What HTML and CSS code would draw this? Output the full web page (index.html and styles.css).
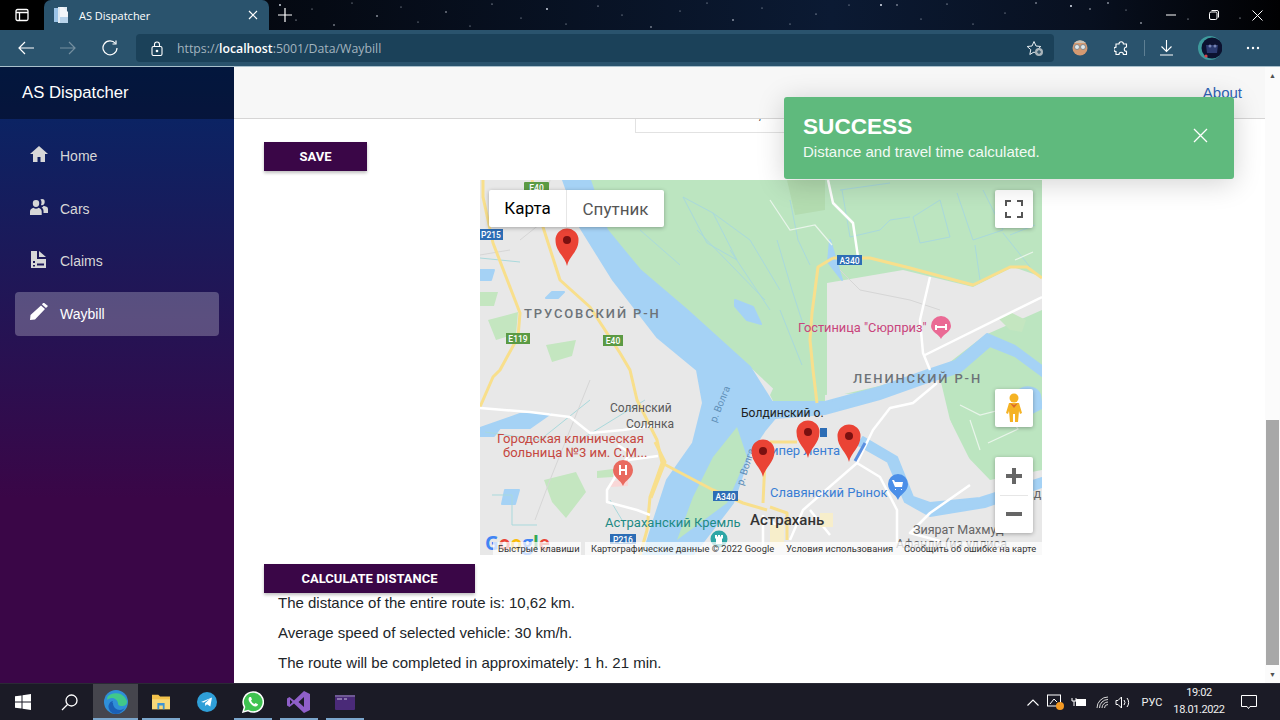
FILE: index.html
```html
<!DOCTYPE html>
<html lang="en">
<head>
<meta charset="utf-8">
<title>AS Dispatcher</title>
<link rel="stylesheet" href="styles.css">
</head>
<body>
<div class="chrome">
  <div class="titlebar">
    <svg class="stars" width="1280" height="30" viewBox="0 0 1280 30" fill="#dfe6f2">
      <circle cx="280" cy="5" r=".9"/><circle cx="296" cy="20" r=".6"/><circle cx="312" cy="9" r=".5"/><circle cx="334" cy="25" r=".7"/><circle cx="352" cy="3" r=".5"/><circle cx="377" cy="16" r=".8"/><circle cx="401" cy="7" r=".5"/><circle cx="418" cy="22" r=".5"/><circle cx="446" cy="12" r=".7"/><circle cx="470" cy="26" r=".5"/><circle cx="492" cy="4" r=".6"/><circle cx="521" cy="18" r=".5"/><circle cx="547" cy="9" r=".9"/><circle cx="566" cy="24" r=".5"/><circle cx="598" cy="6" r=".6"/><circle cx="622" cy="15" r=".5"/><circle cx="651" cy="27" r=".7"/><circle cx="680" cy="11" r=".5"/><circle cx="707" cy="3" r=".5"/><circle cx="733" cy="20" r=".8"/><circle cx="762" cy="8" r=".5"/><circle cx="790" cy="24" r=".5"/><circle cx="816" cy="14" r=".6"/><circle cx="849" cy="5" r=".5"/><circle cx="881" cy="5" r="1"/><circle cx="897" cy="5" r=".7"/><circle cx="921" cy="19" r=".5"/><circle cx="947" cy="4" r=".6"/><circle cx="973" cy="24" r=".5"/><circle cx="1005" cy="13" r=".5"/><circle cx="1036" cy="3" r=".7"/><circle cx="1071" cy="6" r="1"/><circle cx="1090" cy="9" r=".7"/><circle cx="1108" cy="3" r=".8"/><circle cx="1126" cy="10" r=".5"/><circle cx="1141" cy="23" r=".8"/><circle cx="1188" cy="19" r=".6"/><circle cx="1240" cy="18" r=".6"/>
    </svg>
    <div class="tab-toggle"><svg width="14" height="14" viewBox="0 0 14 14" fill="none" stroke="#fff" stroke-width="1.3"><rect x="1" y="1.5" width="12" height="11" rx="1.5"/><path d="M1 4.500h12M4.500 4.500v8"/></svg></div>
    <div class="tab">
      <svg class="favicon" width="16" height="17" viewBox="0 0 16 17"><rect x="0" y="1" width="6" height="14" fill="#9cc3e6"/><rect x="4" y="0" width="9" height="16" fill="#dfe9f2"/><path d="M9 0l5 5v11H6V0z" fill="#f3f6f9"/><rect x="6" y="10" width="8" height="6" fill="#b8d3ea"/></svg>
      <span class="tab-title">AS Dispatcher</span>
      <svg class="tab-close" width="10" height="10" viewBox="0 0 10 10" stroke="#fff" stroke-width="1.2"><path d="M1 1l8 8M9 1l-8 8"/></svg>
    </div>
    <svg class="new-tab" width="14" height="14" viewBox="0 0 14 14" stroke="#fff" stroke-width="1.2"><path d="M7 0v14M0 7h14"/></svg>
    <div class="grow"></div>
    <div class="winctl">
      <svg width="10" height="10" viewBox="0 0 10 10" stroke="#fff" stroke-width="1"><path d="M0 5h10"/></svg>
      <svg width="10" height="10" viewBox="0 0 10 10" fill="none" stroke="#fff" stroke-width="1"><rect x=".5" y="2" width="7.5" height="7.5" rx="1.5"/><path d="M2.500 .5H8a1.500 1.500 0 0 1 1.500 1.500v5.500"/></svg>
      <svg width="11" height="11" viewBox="0 0 11 11" stroke="#fff" stroke-width="1"><path d="M.5.5l10 10M10.500 .5l-10 10"/></svg>
    </div>
  </div>
  <div class="toolbar">
    <svg class="nav-ic" width="16" height="14" viewBox="0 0 16 14" fill="none" stroke="#fff" stroke-width="1.2"><path d="M16 7H1M7 1L1 7l6 6"/></svg>
    <svg class="nav-ic dim" width="16" height="14" viewBox="0 0 16 14" fill="none" stroke="#fff" stroke-width="1.2"><path d="M0 7h15M9 1l6 6-6 6"/></svg>
    <svg class="nav-ic" width="16" height="16" viewBox="0 0 16 16" fill="none" stroke="#fff" stroke-width="1.2"><path d="M13.500 3.500A7 7 0 1 0 15 8"/><path d="M14 .5v3.500h-3.500"/></svg>
    <div class="address">
      <svg class="lock" width="12" height="15" viewBox="0 0 12 15" fill="none" stroke="#fff" stroke-width="1.1"><rect x="1" y="5.500" width="10" height="9" rx="1.500"/><path d="M3.500 5.500V3.500a2.500 2.500 0 0 1 5 0v2"/><circle cx="6" cy="10" r=".8" fill="#fff"/></svg>
      <span class="url">https://<b>localhost</b>:5001/Data/Waybill</span>
      <div class="grow"></div>
      <svg class="fav" width="18" height="17" viewBox="0 0 18 17"><path d="M8 1.500l2 4.500 4.800.5-3.600 3.200 1 4.800L8 12l-4.200 2.500 1-4.800L1.200 6.500 6 6z" fill="none" stroke="#e8eef2" stroke-width="1"/><circle cx="13" cy="12" r="4" fill="#a9b4ba"/><path d="M13 10v4M11 12h4" stroke="#1b4159" stroke-width="1"/></svg>
    </div>
    <svg class="tool-avatar" width="16" height="16" viewBox="0 0 16 16"><circle cx="8" cy="8" r="7.500" fill="#d59a72"/><circle cx="5" cy="7" r="2.500" fill="#dfe8ec" stroke="#66737a" stroke-width=".7"/><circle cx="11" cy="7" r="2.500" fill="#dfe8ec" stroke="#66737a" stroke-width=".7"/><path d="M2 3a8 8 0 0 1 12 0z" fill="#c9c2b5"/></svg>
    <svg class="tool-ext" width="15" height="15" viewBox="0 0 15 15" fill="none" stroke="#fff" stroke-width="1.100"><path d="M5 3a2.200 2.200 0 0 1 4.400 0h3.100v3a2.200 2.200 0 0 0 0 4.400V13.500H9.400a2.200 2.200 0 0 0-4.400 0H2v-3a2.200 2.200 0 0 1 0-4.400V3z"/></svg>
    <span class="tool-sep"></span>
    <svg class="tool-dl" width="13" height="16" viewBox="0 0 13 16" fill="none" stroke="#fff" stroke-width="1.100"><path d="M6.500 0v11M1.500 6.500l5 5 5-5M0 15h13"/></svg>
    <svg class="tool-profile" width="24" height="24" viewBox="0 0 24 24"><circle cx="12" cy="12" r="12" fill="#3e9a9c"/><circle cx="14" cy="12" r="10.500" fill="#0c1230"/><path d="M8 9h12l-1 8H9z" fill="#2b3a70"/><circle cx="12" cy="10" r="1.500" fill="#7684b4"/><circle cx="17" cy="10" r="1.500" fill="#7684b4"/><circle cx="8" cy="20" r="1.600" fill="#d8434a"/></svg>
    <svg class="tool-more" width="14" height="4" viewBox="0 0 14 4" fill="#fff"><circle cx="2" cy="2" r="1.200"/><circle cx="7" cy="2" r="1.200"/><circle cx="12" cy="2" r="1.200"/></svg>
  </div>
</div>

<div class="app">
  <aside class="sidebar">
    <div class="brand">AS Dispatcher</div>
    <nav class="nav">
      <a class="nav-item"><svg width="18" height="16" viewBox="0 0 18 16" fill="currentColor"><path d="M9 0L0 8h3v8h4.500v-5h3v5H15V8h3z"/></svg><span>Home</span></a>
      <a class="nav-item"><svg width="18" height="16" viewBox="0 0 18 16" fill="currentColor"><path d="M6 1a3.200 3.200 0 0 1 3.200 3.400C9.200 6.500 8.200 8 6 8S2.800 6.500 2.800 4.400A3.200 3.200 0 0 1 6 1zM0 16v-3.500C0 10.500 2 9.200 3.500 8.800 4.200 9.500 5 9.800 6 9.800s1.800-.3 2.500-1c1.500.4 3.200 1.700 3.200 3.700V16zM12 0a2.800 2.800 0 0 1 2.700 3c0 1.800-1 3.200-2.700 3.200-.4 0-.7-.1-1-.2.300-.6.500-1.500.5-2.400 0-1.200-.4-2.300-1.200-3A2.900 2.900 0 0 1 12 0zM13.500 6.800c2 .5 4.500 1 4.500 3.200v4h-4.500v-2c0-1.800-1-3-2-3.600 1 0 1.500-.7 2-1.600z"/></svg><span>Cars</span></a>
      <a class="nav-item"><svg width="18" height="17" viewBox="0 0 18 17" fill="currentColor" fill-rule="evenodd"><path d="M1 0h6v8h9v9H1zM3 10v2h2v-2zM3 14v1.500h2V14zM7 12.500v2h7v-2zM9 0l7 6H9z"/></svg><span>Claims</span></a>
      <a class="nav-item active"><svg width="18" height="17" viewBox="0 0 18 17" fill="currentColor"><path d="M13 0l1-.2L18 3l-2 2-4-3.500zM11 2.500l4 3.500L5 16.500 0 17l.5-5z"/></svg><span>Waybill</span></a>
    </nav>
  </aside>

  <main class="main">
    <header class="topbar"><a class="about">About</a></header>
    <div class="content">
      <div class="field-stub"><span class="field-text">ст. Тайбоеннота, 27</span></div>
      <button class="btn btn-save">SAVE</button>
      <div class="map">
        <svg class="map-art" width="562" height="375" viewBox="0 0 562 375">
          <rect class="m-land" width="562" height="375"/>
          <path class="m-green" d="M110 0H562V300H500L470 240 440 210 345 215 345 110 300 215 270 187 207 130 160 90 127 50z"/>
          <path class="m-green" d="M290 215L345 100V225H295z"/>
          <path class="m-land" d="M347 103L423 90 493 107 533 87 562 97V130L505 155 470 182 440 195 395 207 347 218z"/>
          <path class="m-land" d="M300 240L350 228 400 215 460 198 470 240 483 272 510 300 562 290V375H200z"/>
          <path class="m-patch2" d="M307 0H345V30L315 35z"/>
          <path class="m-water" d="M83 0H110L127 50 160 90 207 130 270 187 292 222 345 222 400 207 445 191 475 181 507 154 535 166 562 186V196L535 176 510 166 480 192 445 203 400 219 345 234 295 238 285 250 270 273 253 323 213 375H163L173 343 187 300 213 263 223 223 217 190 177 157 133 100 100 47z"/>
          <path class="m-green" d="M257 247L267 277 247 323 197 360 213 317 233 277z"/>
          <path class="m-water" d="M383 257L417 277 433 317 450 323 500 318 562 298V307L505 327 450 336 425 322 408 282 378 265z"/>
          <path class="m-water" d="M560 215a12 10 0 0 0-24 5l14 14 12-6zM255 120l18 7 8 17-14-4-12-14zM350 60l12 40-14-18z"/>
          <path class="m-water" d="M0 90h14l-3 10H0zM72 112h12l-6 6H66zM0 248l40-14 30 0-20 14-30 0-6 8-14 0zM25 310h14l-4 14H22z"/>
          <path class="m-patch" d="M0 112h18l-4 14H0zM8 140l30-8-2 22-20 6zM66 165l30-5-4 16-20 6zM64 300l32-8 10 20-20 26-14-16zM82 10H98V20H82zM117 291l16-2v8l-16 1zM530 150l-12-12 12-6 16 8-4 12z"/>
          <path class="m-pink" d="M130 302l18-4v8l-18 1z"/>
          <g class="m-canal">
            <path d="M203 17L233 33 257 80 227 63zM160 50L200 85M217 50L285 120M250 70L290 130M233 33L270 60 300 110"/>
            <path d="M360 10L410 3M362 10L370 57 400 50 410 40 430 37M433 37L440 63 470 57 460 20zM477 13L493 60 523 50 503 10M523 53L550 87M495 65L500 100M530 55L555 45M310 20L318 60 330 85M297 60L312 110 325 150M300 130L322 185"/>
            <path d="M0 78L40 82M5 252L60 260 110 220M165 220L100 260M130 320l15 25M12 315h20v30l25 0M60 10L75 28"/>
          </g>
          <g class="m-gridline">
            <path d="M360 90L380 110 430 120 460 130M64 28L70 0M40 60L65 40M0 75L30 70M110 200L70 300 55 340"/>
          </g>
          <g class="m-road-thin">
            <path d="M290 20L310 50 335 45 352 65M480 225l20 10 24-6 14 20-30 14M490 240l10 30M535 80l18-8"/>
          </g>
          <g class="m-road-y">
            <path d="M52 0L63 47 80 100 110 127 140 173 150 190 157 220 177 260 182 283 170 317 167 350 160 375"/>
            <path d="M182 283L233 310 263 323 287 330"/>
            <path d="M3 0L3 17 13 63 40 133 38 157 20 190 13 197 0 227"/>
            <path d="M353 78L338 87 332 133 330 160 333 190 337 223"/>
            <path d="M353 78H378L390 78 430 88 493 105 530 87 547 87 562 98"/>
            <path d="M283 323L285 280M290 262H317M290 327L307 333V360M175 262l10 20-14 36"/>
          </g>
          <g class="m-road-w">
            <path d="M0 228L50 232 90 237 110 253 143 250 177 245"/>
            <path d="M138 265L150 273 127 310V322L157 330 170 335M148 280l30-4"/>
            <path d="M348 0L353 23 373 43 378 77"/>
            <path d="M450 97L440 140 443 173 450 190M445 175L562 117"/>
            <path d="M457 203L433 223 410 228 393 250 377 283 323 330 310 360M377 283L400 297 417 330V363"/>
            <path d="M290 340L300 348M283 335l0 40M330 330l20 25M490 305l-40 28-20 20 30 8"/>
          </g>
          <path class="m-blue" d="M375 281L385 263"/>
          <path class="m-city" d="M290 345l14 0 0 20-14 5zM340 333l13 0 0 14-13 0z"/>
          <g class="m-badge"><rect class="b-g" x="44" y="2" width="25" height="11" rx="1"/><text x="56.500" y="11">E40</text></g>
          <g class="m-badge"><rect class="b-b" x="0" y="49" width="23" height="11"/><text x="11" y="58">Р215</text></g>
          <g class="m-badge"><rect class="b-g" x="26" y="153" width="24" height="11"/><text x="38" y="162">E119</text></g>
          <g class="m-badge"><rect class="b-g" x="123" y="155" width="20" height="11"/><text x="133" y="164">E40</text></g>
          <g class="m-badge"><rect class="b-b" x="357" y="75" width="25" height="10"/><text x="369.500" y="84">A340</text></g>
          <g class="m-badge"><rect class="b-b" x="233" y="311" width="25" height="10"/><text x="245.500" y="320">A340</text></g>
          <g class="m-badge"><rect class="b-b" x="130" y="354" width="26" height="10"/><text x="143" y="363">Р216</text></g>
          <g class="m-badge"><rect class="b-b" x="340" y="248" width="7" height="9"/></g>
          <text class="t-area" x="44" y="138">ТРУСОВСКИЙ Р-Н</text>
          <text class="t-area" x="373" y="203">ЛЕНИНСКИЙ Р-Н</text>
          <text class="t-hotel" x="318" y="152">Гостиница "Сюрприз"</text>
          <text class="t-place" x="130" y="232">Солянский</text>
          <text class="t-place" x="146" y="248">Солянка</text>
          <text class="t-hosp" x="17" y="263">Городская клиническая</text>
          <text class="t-hosp" x="23" y="277">больница №3 им. С.М...</text>
          <text class="t-dark" x="261" y="237">Болдинский о.</text>
          <text class="t-teal" x="125" y="347">Астраханский Кремль</text>
          <text class="t-city" x="270" y="345">Астрахань</text>
          <text class="t-blue" x="290" y="317">Славянский Рынок</text>
          <text class="t-blue" x="285" y="275">Гипер Лента</text>
          <text class="t-gray" x="433" y="354">Зиярат Махмуд-</text>
          <text class="t-gray" x="416" y="368">Афанди (из удлиса</text>
          <text class="t-gray" x="547" y="318">ад</text>
          <text class="t-river" transform="translate(236 243) rotate(-68)">р. Волга</text>
          <text class="t-river" transform="translate(263 306) rotate(-72)">р. Волга</text>
          <g transform="translate(461 147)"><path d="M0 12C-2 7-10 5-10 -1A10 10 0 0 1 10 -1C10 5 2 7 0 12z" fill="#ea6a95"/><path d="M-6 -2h2v1h8v-2h2v6h-2V1h-8v2h-2z" fill="#fff"/></g>
          <g transform="translate(143 293)"><path d="M0 13C-2 7-10 5-10 -3A10 10 0 0 1 10 -3C10 5 2 7 0 13z" fill="#e96a5f"/><path d="M-4 -8h2v4h4v-4h2v10h-2v-4h-4v4h-2z" fill="#fff"/></g>
          <g transform="translate(418 307)"><path d="M0 13C-2 7-10 5-10 -3A10 10 0 0 1 10 -3C10 5 2 7 0 13z" fill="#4b8fe8"/><path d="M-6 -7h2l1 2h8l-1 5h-7zM-3 2h1v1h-1zM3 2h1v1H3z" fill="#fff"/></g>
          <g transform="translate(239 359)"><circle r="8.500" fill="#2ea6a6"/><path d="M-4 -4h2v1.500h1V-4h2v1.500h1V-4h2v3l-1 1v5h-6V0l-1-1z" fill="#fff"/></g>
          <g class="pin" transform="translate(87 86)"><path d="M0 0C-2-10-11.500-14-11.500-26A11.500 11.500 0 0 1 11.500-26C11.500-14 2-10 0 0z"/><circle cy="-26" r="4"/></g>
          <g class="pin" transform="translate(283 297)"><path d="M0 0C-2-10-11.500-14-11.500-26A11.500 11.500 0 0 1 11.500-26C11.500-14 2-10 0 0z"/><circle cy="-26" r="4"/></g>
          <g class="pin" transform="translate(328 278)"><path d="M0 0C-2-10-11.500-14-11.500-26A11.500 11.500 0 0 1 11.500-26C11.500-14 2-10 0 0z"/><circle cy="-26" r="4"/></g>
          <g class="pin" transform="translate(369 282)"><path d="M0 0C-2-10-11.500-14-11.500-26A11.500 11.500 0 0 1 11.500-26C11.500-14 2-10 0 0z"/><circle cy="-26" r="4"/></g>
          <text class="t-google" x="5" y="370"><tspan fill="#4285f4">G</tspan><tspan fill="#ea4335">o</tspan><tspan fill="#fbbc05">o</tspan><tspan fill="#4285f4">g</tspan><tspan fill="#34a853">l</tspan><tspan fill="#ea4335">e</tspan></text>
        </svg>
        <div class="map-type"><span class="mt-on">Карта</span><span class="mt-off">Спутник</span></div>
        <div class="ctl ctl-full"><svg width="18" height="18" viewBox="0 0 18 18" fill="none" stroke="#555" stroke-width="2"><path d="M1 6V1h5M12 1h5v5M17 12v5h-5M6 17H1v-5"/></svg></div>
        <div class="ctl ctl-peg"><svg width="16" height="30" viewBox="0 0 16 30"><circle cx="8" cy="5" r="4.500" fill="#f5b324"/><path d="M3 10h10l3 10-2 1-1-3-1 11H9v-8H7v8H4L3 18l-1 3-2-1z" fill="#f5b324"/><path d="M4 10l4 5 4-5-4 2z" fill="#d9692b"/></svg></div>
        <div class="ctl ctl-zoom">
          <div class="zoom-btn"><svg width="18" height="18" viewBox="0 0 18 18" fill="#666"><path d="M7 1h4v6h6v4h-6v6H7v-6H1V7h6z"/></svg></div>
          <div class="zoom-div"></div>
          <div class="zoom-btn"><svg width="18" height="18" viewBox="0 0 18 18" fill="#666"><path d="M1 7h16v4H1z"/></svg></div>
        </div>
        <div class="attrib">
          <span class="at at-1">Быстрые клавиши</span>
          <span class="at at-2">Картографические данные © 2022 Google</span>
          <span class="at at-3">Условия использования</span>
          <span class="at at-4">Сообщить об ошибке на карте</span>
        </div>
      </div>
      <button class="btn btn-calc">CALCULATE DISTANCE</button>
      <div class="results">
        <p>The distance of the entire route is: 10,62 km.</p>
        <p>Average speed of selected vehicle: 30 km/h.</p>
        <p>The route will be completed in approximately: 1 h. 21 min.</p>
      </div>
    </div>
    <div class="toast">
      <div class="toast-body">
        <div class="toast-title">SUCCESS</div>
        <div class="toast-msg">Distance and travel time calculated.</div>
      </div>
      <svg class="toast-x" width="15" height="15" viewBox="0 0 15 15" stroke="#fff" stroke-width="1.300"><path d="M1 1l13 13M14 1L1 14"/></svg>
    </div>
  </main>
  <div class="scrollbar">
    <div class="sb-arrow">▲</div>
    <div class="sb-thumb"></div>
    <div class="sb-arrow">▼</div>
  </div>
</div>

<footer class="taskbar">
  <div class="tb-start"><svg width="16" height="16" viewBox="0 0 16 16" fill="#fff"><path d="M0 2.300L6.500 1.400V7.500H0zM7.500 1.200L16 0V7.500H7.500zM0 8.500H6.500V14.600L0 13.700zM7.500 8.500H16V16L7.500 14.800z"/></svg></div>
  <div class="tb-app tb-search"><svg width="17" height="17" viewBox="0 0 17 17" fill="none" stroke="#fff" stroke-width="1.300"><circle cx="10.500" cy="6.500" r="5.500"/><path d="M6.500 10.500L1 16"/></svg></div>
  <div class="tb-app tb-edge run active"><svg width="24" height="24" viewBox="0 0 24 24"><circle cx="12" cy="12" r="12" fill="#2f8fd8"/><path d="M4 6a12 12 0 0 1 19 5c.5 4-3 5.500-6 5-2 0-3-1-3-2.500 0-3-3-5.500-6-5.500-2 0-4 1-4.500 2C3 9 3 7.500 4 6z" fill="#41c88a"/><path d="M9 13c0 4 3 7 7 7 2 0 4-1 5-2.500C19 21 15.500 24 12 24c-4 0-7-3-7.500-7-.2-2 1.500-6 4.500-6-.2 0-.5 1-.5 2z" fill="#1b5fb5"/></svg></div>
  <div class="tb-app run"><svg width="22" height="18" viewBox="0 0 22 20"><path d="M1 2h7l2 2h11v14H1z" fill="#f2c14b"/><path d="M1 7h20v11H1z" fill="#f8d878"/><path d="M7 11h8v7h-2v-4H9v4H7z" fill="#3f94d4"/></svg></div>
  <div class="tb-app"><svg width="20" height="20" viewBox="0 0 20 20"><circle cx="10" cy="10" r="10" fill="#2f9fd8"/><path d="M4 10l11-4.500-1.700 9-3.300-2.300-1.700 1.700-.3-2.700 5-4.500-6.300 3.800z" fill="#fff"/></svg></div>
  <div class="tb-app run"><svg width="22" height="22" viewBox="0 0 22 22"><path d="M11 1a10 10 0 0 0-8.500 15L1 21l5.200-1.400A10 10 0 1 0 11 1z" fill="#3fc351" stroke="#fff" stroke-width="1.500"/><path d="M7.500 6c-1 1-1.500 2.500 0 5s4 4.500 6 4.500c1.500 0 2.500-1.200 2.500-2.200l-2.500-1.300-1 1c-1.500-.5-3-2-3.500-3.500l1-1L9 6z" fill="#fff"/></svg></div>
  <div class="tb-app run"><svg width="24" height="24" viewBox="0 0 24 24"><path d="M17 1l6 3v16l-6 3-10-9.500L2.500 17 0 15.500V8.500L2.500 7 7 10.500z" fill="#8f5fc9"/><path d="M17 7l-5.500 5 5.500 5zM3 9.500v5l2.500-2.500z" fill="#1c1c28"/></svg></div>
  <div class="tb-app tb-term run"><svg width="20" height="15" viewBox="0 0 20 15"><rect width="20" height="15" rx="1" fill="#4a2a78"/><rect width="20" height="2" fill="#6f5a94"/><path d="M2 4h5M9 4h3" stroke="#c8c0e0" stroke-width="1.200"/></svg></div>
  <div class="grow"></div>
  <div class="tray">
    <svg class="tr-chev" width="12" height="7" viewBox="0 0 12 7" fill="none" stroke="#fff" stroke-width="1.100"><path d="M.5 6.500L6 1l5.500 5.500"/></svg>
    <svg class="tr-net" width="18" height="17" viewBox="0 0 18 17"><rect x=".5" y="1" width="13" height="11" fill="none" stroke="#fff"/><path d="M3 10l4-5 3 3" stroke="#fff" fill="none"/><circle cx="13" cy="12" r="4" fill="#f59a23"/></svg>
    <svg class="tr-bat" width="15" height="10" viewBox="0 0 15 10"><path d="M1 1v3h4V1M3 4v5" stroke="#fff" fill="none"/><rect x="5" y="2" width="10" height="7" fill="#fff"/></svg>
    <svg class="tr-wifi" width="13" height="13" viewBox="0 0 13 13" fill="none" stroke="#d8d8d8"><path d="M1 12A11 11 0 0 1 12 1M3.500 12A8.500 8.500 0 0 1 12 3.500M6 12a6 6 0 0 1 6-6M8.500 12a3.500 3.500 0 0 1 3.500-3.500"/></svg>
    <svg class="tr-vol" width="15" height="13" viewBox="0 0 15 13" fill="none" stroke="#fff"><path d="M1 4.500h2L6.500 1v11L3 8.500H1zM9 4a4 4 0 0 1 0 5M12 2a7 7 0 0 1 0 9" /></svg>
    <span class="tr-lang">РУС</span>
    <div class="tr-clock"><span>19:02</span><span>18.01.2022</span></div>
    <svg class="tr-notif" width="16" height="15" viewBox="0 0 16 15" fill="none" stroke="#fff"><path d="M.5.500h15v11H9l-1.500 2-1.500-2H.5z"/></svg>
  </div>
</footer>
</body>
</html>
```

FILE: styles.css
```css
* { box-sizing: border-box; }
html, body { margin: 0; height: 100%; overflow: hidden; }
body {
  width: 1280px;
  height: 720px;
  display: flex;
  flex-direction: column;
  font-family: "Liberation Sans", Arial, sans-serif;
  background: #fff;
}
.grow { flex: 1; }

/* browser chrome */
.chrome { height: 67px; flex: none; display: flex; flex-direction: column; }
.titlebar {
  height: 30px;
  display: flex;
  align-items: center;
  position: relative;
  background: linear-gradient(90deg, #020306 0%, #050a14 25%, #0b1a33 65%, #081020 85%, #010102 100%);
}
.stars { position: absolute; left: 0; top: 0; }
.tab-toggle {
  width: 44px;
  height: 30px;
  background: #000;
  display: flex;
  align-items: center;
  justify-content: center;
  position: relative;
}
.tab {
  width: 225px;
  height: 30px;
  background: #2a536d;
  border-radius: 7px 7px 0 0;
  display: flex;
  align-items: center;
  padding: 0 11px 0 10px;
  position: relative;
}
.tab-title { margin-left: 9px; font: 11px "Open Sans", "Noto Sans", sans-serif; color: #fff; flex: 1; }
.new-tab { margin-left: 9px; position: relative; }
.winctl { display: flex; align-items: center; gap: 33px; padding-right: 17px; position: relative; }
.toolbar {
  height: 37px;
  background: #2a536d;
  border-bottom: 1px solid #a9c0cc;
  display: flex;
  align-items: center;
  padding: 0 0 0 18px;
}
.nav-ic { margin-right: 26px; }
.nav-ic.dim { opacity: .35; margin-right: 26px; }
.nav-ic + .nav-ic + .nav-ic { margin-right: 18px; }
.address {
  width: 918px;
  height: 28px;
  background: #1b4159;
  border-radius: 4px;
  display: flex;
  align-items: center;
  padding: 0 10px 0 15px;
}
.url { margin-left: 14px; font: 12.300px "Open Sans", "Noto Sans", sans-serif; color: #a3b4bf; }
.url b { font-weight: 600; color: #fff; }
.tool-avatar { margin-left: 18px; }
.tool-ext { margin-left: 26px; }
.tool-sep { width: 1px; height: 16px; background: #5e7f93; margin-left: 15px; }
.tool-dl { margin-left: 15px; }
.tool-profile { margin-left: 25px; }
.tool-more { margin-left: 24px; }

/* app */
.app { flex: 1; min-height: 0; display: flex; position: relative; }
.sidebar {
  width: 234px;
  flex: none;
  background: linear-gradient(180deg, #052767 0%, #3a0647 70%);
  display: flex;
  flex-direction: column;
}
.brand {
  height: 52px;
  background: rgba(0, 0, 0, .4);
  color: #fff;
  font-size: 16.700px;
  display: flex;
  align-items: center;
  padding: 0 0 1px 22px;
}
.nav { display: flex; flex-direction: column; padding: 15px 15px 0; gap: 8.500px; }
.nav-item {
  height: 44px;
  display: flex;
  align-items: center;
  gap: 12px;
  padding: 0 0 0 15px;
  color: #d7d7d7;
  font-size: 14px;
  border-radius: 4px;
}
.nav-item svg { margin-top: -4px; flex: none; }
.nav-item.active { background: rgba(255, 255, 255, .25); color: #fff; }

.main { flex: 1; min-width: 0; display: flex; flex-direction: column; position: relative; }
.topbar {
  height: 52px;
  flex: none;
  background: #f7f7f7;
  border-bottom: 1px solid #d6d5d5;
  display: flex;
  justify-content: flex-end;
  align-items: center;
  padding: 0 23px 1px 0;
}
.about { color: #2f62b5; font-size: 15px; }
.content { flex: 1; min-height: 0; overflow: hidden; padding-left: 30px; }
.field-stub {
  width: 500px;
  height: 14px;
  margin-left: 371px;
  border: 1px solid #e2e2e2;
  border-top: 0;
  overflow: hidden;
}
.field-text {
  display: block;
  margin: -12px 0 0 15px;
  font-size: 14.400px;
  line-height: 14px;
  color: #333;
}
.btn {
  display: block;
  height: 29px;
  border: 0;
  background: #3a0647;
  color: #fff;
  font: 700 13px Roboto, sans-serif;
  text-transform: uppercase;
  box-shadow: 0 2px 3px rgba(0, 0, 0, .25);
  padding: 0;
}
.btn-save { width: 103px; margin-top: 9px; }
.btn-calc { width: 211px; margin-top: 9px; }

.map {
  width: 562px;
  height: 375px;
  margin: 9px 0 0 216px;
  position: relative;
  overflow: hidden;
}
.map-art { display: block; }
.m-land { fill: #e8e8e8; }
.m-green { fill: #bce5c0; }
.m-water { fill: #a5d2f5; stroke: #a5d2f5; stroke-width: 2; stroke-linejoin: round; }
.m-patch { fill: #c4e6c0; }
.m-patch2 { fill: #b3dcb0; }
.m-pink { fill: #f9d7d7; }
.m-canal path { fill: none; stroke: #a9d9dc; stroke-width: 1; }
.m-gridline path { fill: none; stroke: #d6d6d6; stroke-width: 1; }
.m-road-thin path { fill: none; stroke: #e9f5ea; stroke-width: 1.200; }
.m-road-y path { fill: none; stroke: #f8df8c; stroke-width: 3; stroke-linejoin: round; }
.m-road-w path { fill: none; stroke: #fff; stroke-width: 2.500; stroke-linejoin: round; }
.m-blue { fill: none; stroke: #5a8fe0; stroke-width: 3; }
.m-city { fill: #f7eecb; }
.m-badge text { font: 500 8.500px Roboto, sans-serif; fill: #fff; text-anchor: middle; }
.b-g { fill: #5b9a44; }
.b-b { fill: #2d6db5; }
.t-area { font: 500 13px Roboto, sans-serif; fill: #6d7378; letter-spacing: 1.880px; }
.t-hotel { font: 12.800px Roboto, sans-serif; fill: #c8447c; }
.t-place { font: 12px Roboto, sans-serif; fill: #5a5a5a; }
.t-hosp { font: 13.100px Roboto, sans-serif; fill: #c5473f; }
.t-dark { font: 12.100px Roboto, sans-serif; fill: #222; }
.t-teal { font: 13px Roboto, sans-serif; fill: #1f8a84; }
.t-city { font: 500 15px Roboto, sans-serif; fill: #333; }
.t-blue { font: 13px Roboto, sans-serif; fill: #3a7fd5; }
.t-gray { font: 12.500px Roboto, sans-serif; fill: #666; }
.t-river { font: 10px Roboto, sans-serif; fill: #5f8fb8; }
.t-google { font: 700 19px "Open Sans", sans-serif; }
.pin path { fill: #ea4335; }
.pin circle { fill: #7a1010; }

.map-type {
  position: absolute;
  left: 9px;
  top: 10px;
  width: 175px;
  height: 37px;
  background: #fff;
  border-radius: 2px;
  box-shadow: 0 1px 4px rgba(0, 0, 0, .3);
  display: flex;
  align-items: center;
  font: 17px Roboto, sans-serif;
}
.mt-on { width: 78px; text-align: center; color: #000; border-right: 1px solid #e6e6e6; line-height: 37px; }
.mt-off { flex: 1; text-align: center; color: #565656; }
.ctl {
  position: absolute;
  left: 515px;
  width: 38px;
  background: #fff;
  border-radius: 2px;
  box-shadow: 0 1px 4px rgba(0, 0, 0, .3);
  display: flex;
  align-items: center;
  justify-content: center;
}
.ctl-full { top: 10px; height: 38px; }
.ctl-peg { top: 209px; height: 38px; }
.ctl-zoom { top: 277px; height: 76px; flex-direction: column; }
.zoom-btn { height: 37.500px; display: flex; align-items: center; justify-content: center; }
.zoom-div { width: 28px; height: 1px; background: #e6e6e6; }
.attrib {
  position: absolute;
  left: 13px;
  right: 0;
  bottom: 0;
  height: 13px;
  display: flex;
  font: 9.350px/13px Roboto, sans-serif;
  color: #333;
}
.at { background: rgba(255, 255, 255, .72); padding: 0 5px; white-space: nowrap; }
.at-1 { width: 88px; margin-right: 4px; }
.at-2 { width: 195px; padding-left: 6px; }
.at-3 { width: 119px; padding-left: 6px; }
.at-4 { flex: 1; padding-left: 5px; }

.results { padding: 1px 0 0 14px; color: #212529; font-size: 15px; }
.results p { margin: 0; height: 30px; line-height: 18px; }

.toast {
  position: absolute;
  left: 550px;
  top: 30px;
  width: 450px;
  height: 82px;
  background: #5fba7d;
  border-radius: 3px;
  box-shadow: 0 4px 28px rgba(0, 0, 0, .18);
  color: #fff;
  display: flex;
  align-items: center;
  padding: 1px 26px 0 19px;
}
.toast-body { flex: 1; }
.toast-title { font-size: 22.600px; font-weight: 700; line-height: 27px; margin: -3px 0 3px; }
.toast-msg { font-size: 15px; line-height: 18px; color: #f2f9f4; }
.toast-x { margin: -6px 0 0 0; }

.scrollbar {
  width: 15px;
  flex: none;
  background: #fbfbfb;
  display: flex;
  flex-direction: column;
}
.sb-arrow { height: 17px; font-size: 7px; line-height: 17px; color: #505050; text-align: center; flex: none; }
.sb-thumb { height: 245px; margin: 336px 1px 0; background: #a8a8a8; }
.sb-arrow:last-child { margin-top: auto; }

/* taskbar */
.taskbar {
  height: 37px;
  flex: none;
  background: #1b1b26;
  border-top: 1px solid #2a2a35;
  display: flex;
  align-items: stretch;
}
.tb-start { width: 45px; display: flex; align-items: center; justify-content: center; }
.tb-app {
  width: 46px;
  display: flex;
  align-items: center;
  justify-content: center;
  position: relative;
}
.tb-search { width: 48px; }
.tb-edge { width: 45px; background: #45454d; }
.run::after {
  content: "";
  position: absolute;
  left: 4px;
  right: 4px;
  bottom: 0;
  height: 2px;
  background: #7ba6cc;
}
.tb-edge.run::after { left: 0; right: 0; }
.tray { display: flex; align-items: center; color: #fff; }
.tr-chev { margin-right: 8px; }
.tr-net { margin-right: 5.500px; }
.tr-bat { margin-right: 10px; }
.tr-wifi { margin-right: 6px; }
.tr-vol { margin-right: 10.500px; }
.tr-lang { font: 11px Roboto, sans-serif; width: 24px; margin-right: 5px; color: #f0f0f0; text-align: center; }
.tr-clock {
  width: 60px;
  display: flex;
  flex-direction: column;
  align-items: center;
  margin-top: -2px;
  font: 11px/17px Roboto, sans-serif;
  letter-spacing: -.4px;
  color: #f0f0f0;
}
.tr-notif { margin: 0 23px 0 12px; }
```
